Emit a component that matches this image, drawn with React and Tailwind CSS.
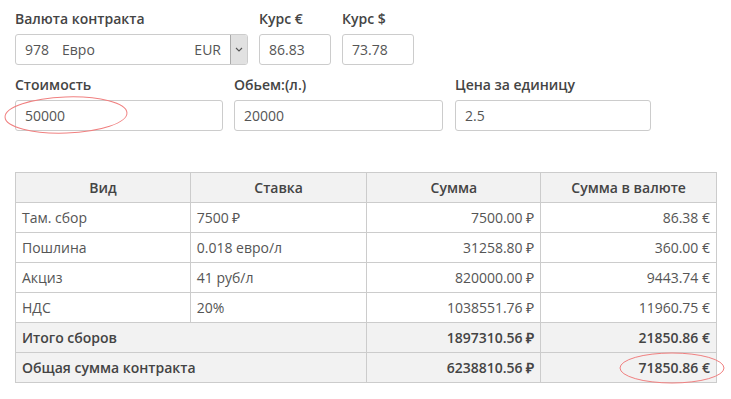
import React from "react";

const rows = [
  { vid: "Там. сбор", stavka: "7500 ₽", summa: "7500.00 ₽", val: "86.38 €" },
  { vid: "Пошлина", stavka: "0.018 евро/л", summa: "31258.80 ₽", val: "360.00 €" },
  { vid: "Акциз", stavka: "41 руб/л", summa: "820000.00 ₽", val: "9443.74 €" },
  { vid: "НДС", stavka: "20%", summa: "1038551.76 ₽", val: "11960.75 €" },
];

function Field({ label, value, w }) {
  return (
    <div className="flex flex-col">
      <label className="mb-[6px] h-[18px] text-[14px] font-semibold leading-[18px] text-[#444]">{label}</label>
      <div className={`flex h-[31px] items-center rounded-[3px] border border-[#ccc] bg-white px-[9px] text-[14px] text-[#555] ${w}`}>
        {value}
      </div>
    </div>
  );
}

export default function App() {
  return (
    <div className="relative h-[399px] w-[731px] bg-white font-['Open_Sans',sans-serif]">
      <div className="px-[15px] pt-[10px]">
        {/* Валюта и курсы */}
        <div className="flex gap-[11px]">
          <div className="flex flex-col">
            <label className="mb-[6px] h-[18px] text-[14px] font-semibold leading-[18px] text-[#444]">Валюта контракта</label>
            <div className="flex h-[31px] w-[233px] overflow-hidden rounded-[3px] border border-[#ccc] bg-white text-[14px] text-[#555]">
              <div className="flex flex-1 items-center pl-[9px] pr-[9px]">
                <span>978</span>
                <span className="ml-[13px]">Евро</span>
                <span className="ml-auto">EUR</span>
              </div>
              <div className="flex w-[17px] items-center justify-center border-l border-[#aaa] bg-[#e1e1e1]">
                <svg width="8" height="5" viewBox="0 0 8 5" fill="none">
                  <path d="M1 1l3 3 3-3" stroke="#555" strokeWidth="1.1" />
                </svg>
              </div>
            </div>
          </div>
          <Field label="Курс €" value="86.83" w="w-[72px]" />
          <Field label="Курс $" value="73.78" w="w-[72px]" />
        </div>

        {/* Стоимость, объем, цена */}
        <div className="mt-[11px] flex gap-[11px]">
          <Field label="Стоимость" value="50000" w="w-[208px]" />
          <Field label="Обьем:(л.)" value="20000" w="w-[209px]" />
          <div className="ml-[1px]">
            <Field label="Цена за единицу" value="2.5" w="w-[196px]" />
          </div>
        </div>

        {/* Таблица */}
        <table className="mt-[41px] w-[702px] border-collapse text-[14px] text-[#555]">
          <colgroup>
            <col className="w-[175px]" />
            <col className="w-[177px]" />
            <col className="w-[174px]" />
            <col className="w-[176px]" />
          </colgroup>
          <thead>
            <tr className="h-[30px] bg-[#f2f2f2]">
              {["Вид", "Ставка", "Сумма", "Сумма в валюте"].map((h) => (
                <th key={h} className="border border-[#ccc] px-[6px] text-center font-semibold text-[#444]">{h}</th>
              ))}
            </tr>
          </thead>
          <tbody>
            {rows.map((r) => (
              <tr key={r.vid} className="h-[30px]">
                <td className="border border-[#ccc] px-[6px]">{r.vid}</td>
                <td className="border border-[#ccc] px-[6px]">{r.stavka}</td>
                <td className="border border-[#ccc] px-[6px] text-right">{r.summa}</td>
                <td className="border border-[#ccc] px-[6px] text-right">{r.val}</td>
              </tr>
            ))}
            <tr className="h-[30px] bg-[#f2f2f2] font-semibold text-[#444]">
              <td colSpan={2} className="border border-[#ccc] px-[6px]">Итого сборов</td>
              <td className="border border-[#ccc] px-[6px] text-right">1897310.56 ₽</td>
              <td className="border border-[#ccc] px-[6px] text-right">21850.86 €</td>
            </tr>
            <tr className="h-[30px] bg-[#f2f2f2] font-semibold text-[#444]">
              <td colSpan={2} className="border border-[#ccc] px-[6px]">Общая сумма контракта</td>
              <td className="border border-[#ccc] px-[6px] text-right">6238810.56 ₽</td>
              <td className="border border-[#ccc] px-[6px] text-right">71850.86 €</td>
            </tr>
          </tbody>
        </table>
      </div>

      {/* красные пометки поверх */}
      <svg className="pointer-events-none absolute left-0 top-0" width="731" height="399" fill="none">
        <ellipse cx="66" cy="115" rx="61" ry="18" stroke="#f08080" strokeWidth="1" transform="rotate(-2 66 115)" />
        <ellipse cx="672" cy="368" rx="52" ry="15" stroke="#f08080" strokeWidth="1" />
      </svg>
    </div>
  );
}
